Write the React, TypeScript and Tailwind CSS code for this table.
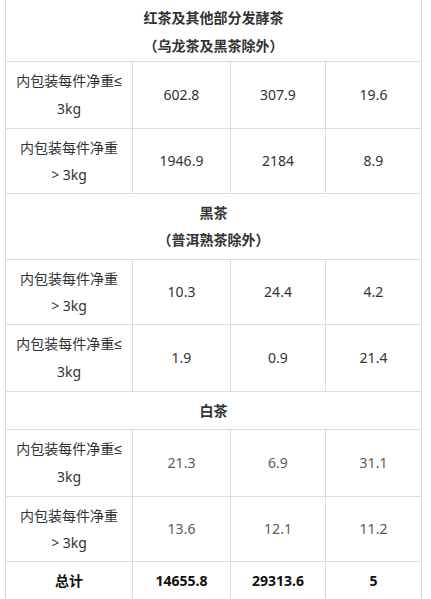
import React from 'react';

type Row =
  | { kind: 'head'; lines: string[]; first?: boolean }
  | { kind: 'data'; label: [string, string]; values: string[]; light?: boolean }
  | { kind: 'total'; values: string[] };

const rows: Row[] = [
  { kind: 'head', lines: ['红茶及其他部分发酵茶', '（乌龙茶及黑茶除外）'], first: true },
  { kind: 'data', label: ['内包装每件净重≤', '3kg'], values: ['602.8', '307.9', '19.6'] },
  { kind: 'data', label: ['内包装每件净重', '> 3kg'], values: ['1946.9', '2184', '8.9'] },
  { kind: 'head', lines: ['黑茶', '（普洱熟茶除外）'] },
  { kind: 'data', label: ['内包装每件净重', '> 3kg'], values: ['10.3', '24.4', '4.2'] },
  { kind: 'data', label: ['内包装每件净重≤', '3kg'], values: ['1.9', '0.9', '21.4'] },
  { kind: 'head', lines: ['白茶'] },
  { kind: 'data', label: ['内包装每件净重≤', '3kg'], values: ['21.3', '6.9', '31.1'], light: true },
  { kind: 'data', label: ['内包装每件净重', '> 3kg'], values: ['13.6', '12.1', '11.2'], light: true },
  { kind: 'total', values: ['总计', '14655.8', '29313.6', '5'] },
];

const cell = 'border border-[#dcdcdc] px-[6px] text-center align-middle';
const pad = 'pt-[5px] pb-[5.5px]';

// the ≤ sign in the source is the narrow Latin one, not the CJK-width glyph
function Label({ text }: { text: string }) {
  if (!text.endsWith('≤')) return <>{text}</>;
  return (
    <>
      {text.slice(0, -1)}
      <span style={{ fontFamily: '"Liberation Sans", sans-serif' }}>≤</span>
    </>
  );
}

export default function App() {
  return (
    <div
      className="min-h-screen bg-white overflow-hidden"
      style={{ fontFamily: '"Noto Sans", "Noto Sans CJK SC", sans-serif' }}
    >
      <table className="ml-[5px] mt-[-3px] w-[416px] table-fixed border-collapse text-[14px] leading-[27px] text-[#333]">
        <colgroup>
          <col className="w-[127px]" />
          <col className="w-[98px]" />
          <col className="w-[95px]" />
          <col className="w-[96px]" />
        </colgroup>
        <tbody>
          {rows.map((row, i) => {
            if (row.kind === 'head') {
              return (
                <tr key={i}>
                  <td
                    colSpan={4}
                    className={`${cell} font-bold ${row.first ? 'pt-[6px] pb-[1px] leading-[28px]' : pad}`}
                  >
                    {row.lines.map((l) => (
                      <div key={l}>{l}</div>
                    ))}
                  </td>
                </tr>
              );
            }
            if (row.kind === 'total') {
              return (
                <tr key={i}>
                  {row.values.map((v) => (
                    <td key={v} className={`${cell} ${pad} font-bold text-[#111]`}>
                      {v}
                    </td>
                  ))}
                </tr>
              );
            }
            return (
              <tr key={i}>
                <td className={`${cell} ${pad} px-[2px]`}>
                  <div className="whitespace-nowrap">
                    <Label text={row.label[0]} />
                  </div>
                  <div>{row.label[1]}</div>
                </td>
                {row.values.map((v, j) => (
                  <td key={j} className={`${cell} ${pad} ${row.light ? 'text-[#5a5a5a]' : ''}`}>
                    {v}
                  </td>
                ))}
              </tr>
            );
          })}
        </tbody>
      </table>
    </div>
  );
}
